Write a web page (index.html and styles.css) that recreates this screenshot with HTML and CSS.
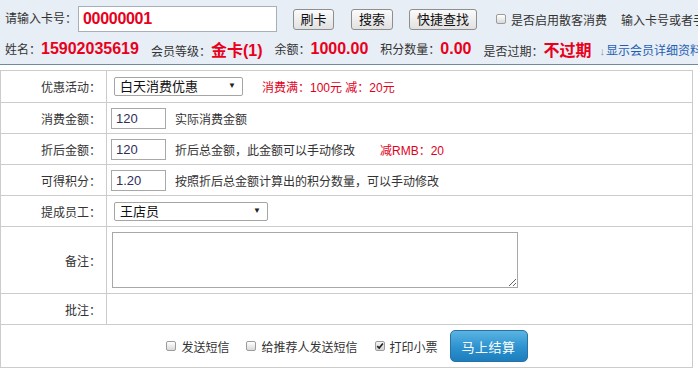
FILE: index.html
```html
<!DOCTYPE html>
<html lang="zh-CN">
<head>
<meta charset="utf-8">
<title>会员消费结算</title>
<link rel="stylesheet" href="styles.css">
</head>
<body>
<div class="header">
  <div class="hrow1">
    <span class="hlabel">请输入卡号：</span>
    <input class="card" type="text" value="00000001">
    <button class="btn b1">刷卡</button>
    <button class="btn b2">搜索</button>
    <button class="btn b3">快捷查找</button>
    <label class="chk hchk"><span class="box"></span>是否启用散客消费</label>
    <span class="hint">输入卡号或者手机号码进行查找</span>
  </div>
  <div class="hrow2">
    <span class="item">姓名：<b class="num">15902035619</b></span>
    <span class="item">会员等级：<b class="big">金卡(1)</b></span>
    <span class="item">余额：<b class="num">1000.00</b></span>
    <span class="item">积分数量：<b class="num">0.00</b></span>
    <span class="item">是否过期：<b class="big">不过期</b></span>
    <a class="more" href="#"><span class="arr">↓</span>显示会员详细资料</a>
  </div>
</div>

<div class="form">
  <div class="lab">优惠活动：</div>
  <div class="val">
    <span class="sel w1"><select><option>白天消费优惠</option></select></span>
    <span class="red r1">消费满：100元 减：20元</span>
  </div>

  <div class="lab">消费金额：</div>
  <div class="val">
    <input class="txt" type="text" value="120">
    <span class="desc">实际消费金额</span>
  </div>

  <div class="lab">折后金额：</div>
  <div class="val">
    <input class="txt" type="text" value="120">
    <span class="desc">折后总金额，此金额可以手动修改</span>
    <span class="red r3">减RMB：20</span>
  </div>

  <div class="lab">可得积分：</div>
  <div class="val">
    <input class="txt" type="text" value="1.20">
    <span class="desc">按照折后总金额计算出的积分数量，可以手动修改</span>
  </div>

  <div class="lab">提成员工：</div>
  <div class="val">
    <span class="sel w2"><select><option>王店员</option></select></span>
  </div>

  <div class="lab">备注：</div>
  <div class="val">
    <textarea class="memo"></textarea>
  </div>

  <div class="lab">批注：</div>
  <div class="val"></div>

  <div class="foot">
    <label class="chk"><span class="box"></span>发送短信</label>
    <label class="chk c2"><span class="box"></span>给推荐人发送短信</label>
    <label class="chk c3"><span class="box on"><svg viewBox="0 0 10 10" width="8" height="8"><path d="M1.5 5.2 L4 7.6 L8.6 1.8" fill="none" stroke="#222" stroke-width="2"/></svg></span>打印小票</label>
    <button class="go">马上结算</button>
  </div>
</div>
</body>
</html>
```

FILE: styles.css
```css
* { box-sizing: border-box; }
html, body { margin: 0; padding: 0; background: #fff; }
body {
  font-family: "Liberation Sans", "Noto Sans CJK SC", sans-serif;
  font-size: 12px;
  color: #333;
  width: 698px;
  height: 370px;
  overflow: hidden;
}

/* header */
.header {
  background: #e8eef5;
  border-bottom: 1px solid #6f88a3;
  height: 65px;
  padding: 6px 0 0 5px;
  white-space: nowrap;
  overflow: hidden;
}
.hrow1 { display: flex; align-items: center; height: 26px; }
.hrow1 > *, .hrow2 > * { flex-shrink: 0; }
.hlabel { width: 73px; line-height: 26px; }
.card {
  width: 199px;
  height: 26px;
  border: 1px solid #a7afb8;
  background: #fff;
  color: #e8001c;
  font: bold 16px "Liberation Sans", sans-serif;
  letter-spacing: -0.3px;
  padding: 0 0 0 4px;
  outline: none;
}
.btn {
  height: 21px;
  padding: 0;
  border: 1px solid #8e8e8e;
  border-radius: 3px;
  background: linear-gradient(#fbfbfb, #e1e1e1);
  font: 13px "Liberation Sans", "Noto Sans CJK SC", sans-serif;
  line-height: 19px;
  color: #111;
}
.b1 { margin-left: 16px; width: 41px; }
.b2 { margin-left: 17px; width: 42px; }
.b3 { margin-left: 16px; width: 68px; }
.chk { display: inline-flex; align-items: center; color: #333; }
.hchk { margin-left: 19px; }
.box {
  width: 10px;
  height: 10px;
  margin-right: 5px;
  border: 1px solid #9c9c9c;
  border-radius: 2px;
  background: linear-gradient(#ffffff, #d9d9d9);
  display: inline-flex;
  align-items: center;
  justify-content: center;
}
.box.on { background: linear-gradient(#f4f4f4, #d4d4d4); }
.hint { margin-left: 14px; color: #333; }

.hrow2 {
  margin-top: 6px;
  height: 22px;
  display: flex;
  align-items: center;
}
.item { margin-right: 12px; display: inline-flex; align-items: baseline; }
.num { color: #e8001c; font: bold 16px "Liberation Sans", sans-serif; }
.big { color: #e8001c; font: bold 16px "Liberation Sans", "Noto Sans CJK SC", sans-serif; }
.more { color: #1f5fb3; text-decoration: none; margin-left: -4px; }
.arr { color: #8a9bb0; font-size: 11px; margin-right: 1px; }

/* form grid */
.form {
  display: grid;
  grid-template-columns: 106px 1fr;
  grid-template-rows: 32px 31px 31px 31px 31px 67px 31px 42px;
  width: 693px;
  margin-top: 5px;
  border: 1px solid #cccccc;
}
.lab {
  border-right: 1px solid #cccccc;
  border-bottom: 1px solid #cccccc;
  display: flex;
  align-items: center;
  justify-content: flex-end;
  padding-right: 5px;
  color: #333;
}
.val {
  border-bottom: 1px solid #cccccc;
  display: flex;
  align-items: center;
  padding-left: 4px;
  white-space: nowrap;
}
.val > * { flex-shrink: 0; }
.sel { position: relative; display: inline-block; margin-left: 3px; }
.sel select {
  appearance: none;
  -webkit-appearance: none;
  display: block;
  height: 19px;
  border: 1px solid #a5a5a5;
  border-radius: 2px;
  background: #fff;
  font: 13px "Liberation Sans", "Noto Sans CJK SC", sans-serif;
  color: #111;
  padding: 0 0 0 5px;
  outline: none;
}
.sel::after {
  content: "▼";
  position: absolute;
  right: 7px;
  top: 4px;
  font-size: 8px;
  line-height: 10px;
  color: #222;
  pointer-events: none;
}
.w1 select { width: 129px; }
.w2 select { width: 154px; }
.red { color: #e0001b; }
.r1 { margin-left: 19px; }
.r3 { margin-left: 25px; }
.txt {
  width: 55px;
  height: 21px;
  border: 1px solid #a8a8a8;
  padding: 0 4px;
  font: 13px "Liberation Sans", sans-serif;
  color: #2e2e5a;
  outline: none;
}
.desc { margin-left: 9px; color: #333; }
.memo {
  margin-left: 1px;
  width: 406px;
  height: 56px;
  border: 1px solid #a8a8a8;
  outline: none;
}

.foot {
  grid-column: 1 / -1;
  display: flex;
  align-items: center;
  justify-content: center;
  padding-left: 1px;
}
.foot > * { flex-shrink: 0; }
.c2, .c3 { margin-left: 17px; }
.go {
  margin-left: 12px;
  width: 78px;
  height: 32px;
  border: 1px solid #2a72a5;
  border-radius: 5px;
  background: linear-gradient(#5ab4e2, #2d92cf 55%, #1d7dbd);
  color: #fff;
  font: 13px "Liberation Sans", "Noto Sans CJK SC", sans-serif;
  letter-spacing: 0.5px;
}
```
